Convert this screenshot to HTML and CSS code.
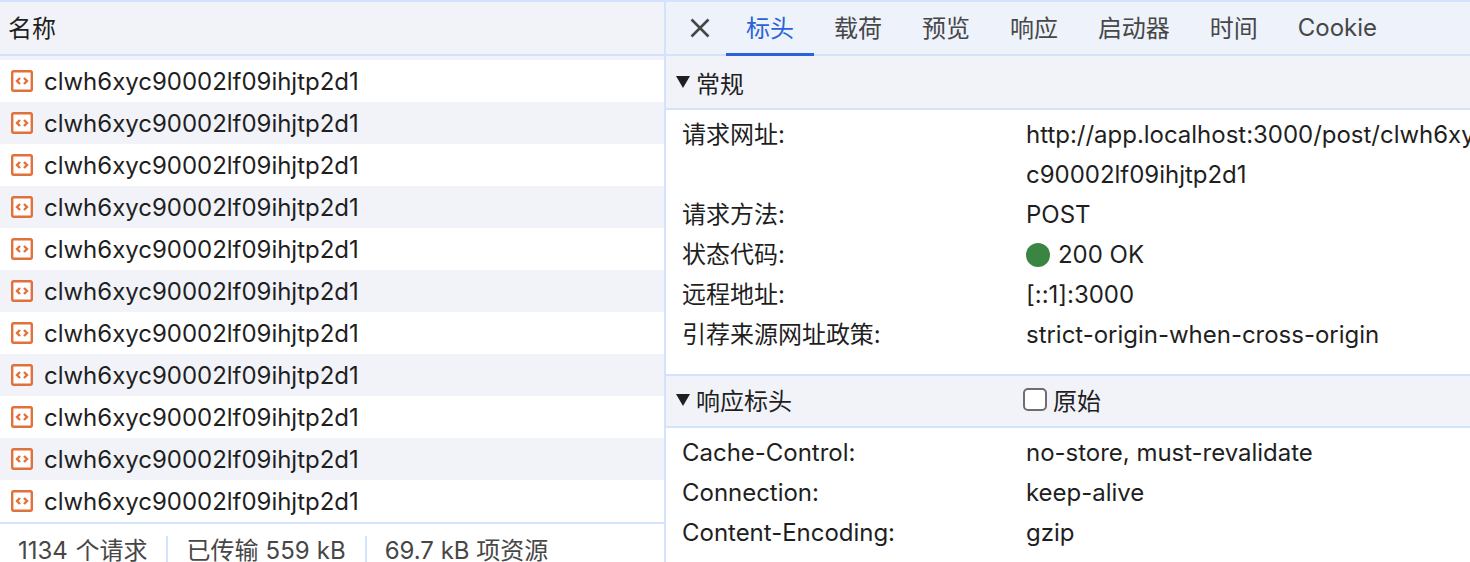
FILE: index.html
```html
<!DOCTYPE html>
<html lang="zh">
<head>
<meta charset="utf-8">
<title>Network</title>
<link rel="stylesheet" href="styles.css">
</head>
<body>
<div class="app">
  <section class="list">
    <div class="list-head">名称</div>
    <div class="rows">
      <div class="row"><svg class="doc" viewBox="0 0 24 24"><rect x="2.2" y="2.2" width="19.6" height="19.6" rx="1.5"/><path d="M10 9l-3 3 3 3M14 9l3 3-3 3"/></svg><span>clwh6xyc90002lf09ihjtp2d1</span></div>
      <div class="row"><svg class="doc" viewBox="0 0 24 24"><rect x="2.2" y="2.2" width="19.6" height="19.6" rx="1.5"/><path d="M10 9l-3 3 3 3M14 9l3 3-3 3"/></svg><span>clwh6xyc90002lf09ihjtp2d1</span></div>
      <div class="row"><svg class="doc" viewBox="0 0 24 24"><rect x="2.2" y="2.2" width="19.6" height="19.6" rx="1.5"/><path d="M10 9l-3 3 3 3M14 9l3 3-3 3"/></svg><span>clwh6xyc90002lf09ihjtp2d1</span></div>
      <div class="row"><svg class="doc" viewBox="0 0 24 24"><rect x="2.2" y="2.2" width="19.6" height="19.6" rx="1.5"/><path d="M10 9l-3 3 3 3M14 9l3 3-3 3"/></svg><span>clwh6xyc90002lf09ihjtp2d1</span></div>
      <div class="row"><svg class="doc" viewBox="0 0 24 24"><rect x="2.2" y="2.2" width="19.6" height="19.6" rx="1.5"/><path d="M10 9l-3 3 3 3M14 9l3 3-3 3"/></svg><span>clwh6xyc90002lf09ihjtp2d1</span></div>
      <div class="row"><svg class="doc" viewBox="0 0 24 24"><rect x="2.2" y="2.2" width="19.6" height="19.6" rx="1.5"/><path d="M10 9l-3 3 3 3M14 9l3 3-3 3"/></svg><span>clwh6xyc90002lf09ihjtp2d1</span></div>
      <div class="row"><svg class="doc" viewBox="0 0 24 24"><rect x="2.2" y="2.2" width="19.6" height="19.6" rx="1.5"/><path d="M10 9l-3 3 3 3M14 9l3 3-3 3"/></svg><span>clwh6xyc90002lf09ihjtp2d1</span></div>
      <div class="row"><svg class="doc" viewBox="0 0 24 24"><rect x="2.2" y="2.2" width="19.6" height="19.6" rx="1.5"/><path d="M10 9l-3 3 3 3M14 9l3 3-3 3"/></svg><span>clwh6xyc90002lf09ihjtp2d1</span></div>
      <div class="row"><svg class="doc" viewBox="0 0 24 24"><rect x="2.2" y="2.2" width="19.6" height="19.6" rx="1.5"/><path d="M10 9l-3 3 3 3M14 9l3 3-3 3"/></svg><span>clwh6xyc90002lf09ihjtp2d1</span></div>
      <div class="row"><svg class="doc" viewBox="0 0 24 24"><rect x="2.2" y="2.2" width="19.6" height="19.6" rx="1.5"/><path d="M10 9l-3 3 3 3M14 9l3 3-3 3"/></svg><span>clwh6xyc90002lf09ihjtp2d1</span></div>
      <div class="row"><svg class="doc" viewBox="0 0 24 24"><rect x="2.2" y="2.2" width="19.6" height="19.6" rx="1.5"/><path d="M10 9l-3 3 3 3M14 9l3 3-3 3"/></svg><span>clwh6xyc90002lf09ihjtp2d1</span></div>
    </div>
    <div class="status">
      <span class="stat">1134 个请求</span>
      <span class="stat">已传输 559 kB</span>
      <span class="stat">69.7 kB 项资源</span>
    </div>
  </section>
  <section class="detail">
    <nav class="tabs">
      <svg class="close" viewBox="0 0 20 20"><path d="M1.5 1.5l17 17M18.5 1.5l-17 17"/></svg>
      <span class="tab active">标头</span>
      <span class="tab">载荷</span>
      <span class="tab">预览</span>
      <span class="tab">响应</span>
      <span class="tab">启动器</span>
      <span class="tab">时间</span>
      <span class="tab latin">Cookie</span>
    </nav>
    <div class="sec-head general"><i class="tri"></i>常规</div>
    <div class="kv-list first">
      <div class="kv"><div class="k">请求网址:</div><div class="v">http://app.localhost:3000/post/clwh6xyc90002lf09ihjtp2d1</div></div>
      <div class="kv"><div class="k">请求方法:</div><div class="v">POST</div></div>
      <div class="kv"><div class="k">状态代码:</div><div class="v"><i class="dot"></i>200 OK</div></div>
      <div class="kv"><div class="k">远程地址:</div><div class="v">[::1]:3000</div></div>
      <div class="kv"><div class="k">引荐来源网址政策:</div><div class="v">strict-origin-when-cross-origin</div></div>
    </div>
    <div class="sec-head response"><span class="sec-title"><i class="tri"></i>响应标头</span><span class="raw"><i class="check"></i>原始</span></div>
    <div class="kv-list second">
      <div class="kv"><div class="k">Cache-Control:</div><div class="v">no-store, must-revalidate</div></div>
      <div class="kv"><div class="k">Connection:</div><div class="v">keep-alive</div></div>
      <div class="kv"><div class="k">Content-Encoding:</div><div class="v">gzip</div></div>
    </div>
  </section>
</div>
</body>
</html>
```
FILE: styles.css
```css
* { box-sizing: border-box; }
html, body { margin: 0; height: 100%; overflow: hidden; background: #fff; }
body { font-family: Inter, "Noto Sans CJK SC", sans-serif; font-size: 24px; letter-spacing: -0.02px; color: #1f1f1f; }
.app { display: flex; height: 562px; border-top: 2px solid #d3e3fd; }
.list { width: 664px; flex: none; display: flex; flex-direction: column; }
.list-head { height: 54px; padding: 0 0 3px 8px; display: flex; align-items: center; background: #f1f3f9; border-bottom: 2px solid #d3e3fd; }
.rows { padding-top: 4px; background: linear-gradient(#f1f3f9 4px, transparent 4px); border-bottom: 2px solid #d3e3fd; }
.row { height: 42px; display: flex; align-items: center; padding-left: 10px; gap: 10px; background: #fff; }
.row:nth-child(even) { background: #f1f3f9; }
.doc { width: 24px; height: 24px; flex: none; fill: #fff; stroke: #e2703a; stroke-width: 2.4; }
.doc path { fill: none; }
.status { flex: 1; display: flex; align-items: flex-start; padding: 12px 0 0 18px; color: #474747; overflow: hidden; }
.stat { padding-right: 19px; margin-right: 18px; border-right: 2px solid #d3e3fd; line-height: 30px; height: 36px; white-space: nowrap; word-spacing: 1px; }
.stat:nth-child(2) { word-spacing: 0.5px; }
.stat:last-child { border-right: 0; word-spacing: 0; }
.detail { flex: 1; min-width: 0; border-left: 2px solid #d3e3fd; overflow: hidden; }
.tabs { height: 54px; display: flex; align-items: center; background: #edf2fb; border-bottom: 2px solid #d3e3fd; padding-left: 24px; }
.close { width: 20px; height: 20px; fill: none; stroke: #474747; stroke-width: 2.6; margin-right: 16px; flex: none; }
.tab { align-self: flex-start; height: 54px; padding: 0 20px 3px; display: flex; align-items: center; color: #474747; border-bottom: 3px solid transparent; white-space: nowrap; flex: none; }
.tab.latin { padding-bottom: 1px; }
.tab.active { color: #2a63d8; border-bottom-color: #2a63d8; }
.sec-head { display: flex; align-items: center; background: #f1f3f9; border-bottom: 2px solid #d3e3fd; padding-left: 10px; }
.general { height: 54px; }
.response { height: 54px; border-top: 2px solid #d3e3fd; padding-bottom: 3px; }
.sec-title { width: 347px; display: flex; align-items: center; flex: none; }
.tri { width: 0; height: 0; border-left: 7px solid transparent; border-right: 7px solid transparent; border-top: 12px solid #1f1f1f; margin-right: 6px; flex: none; }
.raw { display: flex; align-items: center; gap: 6px; }
.check { width: 24px; height: 23px; border: 2px solid #6e6e6e; border-radius: 5px; background: #fff; flex: none; }
.kv-list { padding: 5px 0 19px; }
.kv { display: grid; grid-template-columns: 344px 1fr; padding: 0 0 0 16px; line-height: 40px; }
.v { word-break: break-all; width: 452px; }
.dot { display: inline-block; width: 24px; height: 24px; border-radius: 50%; background: #3a8541; margin-right: 8px; vertical-align: -4px; }
```
